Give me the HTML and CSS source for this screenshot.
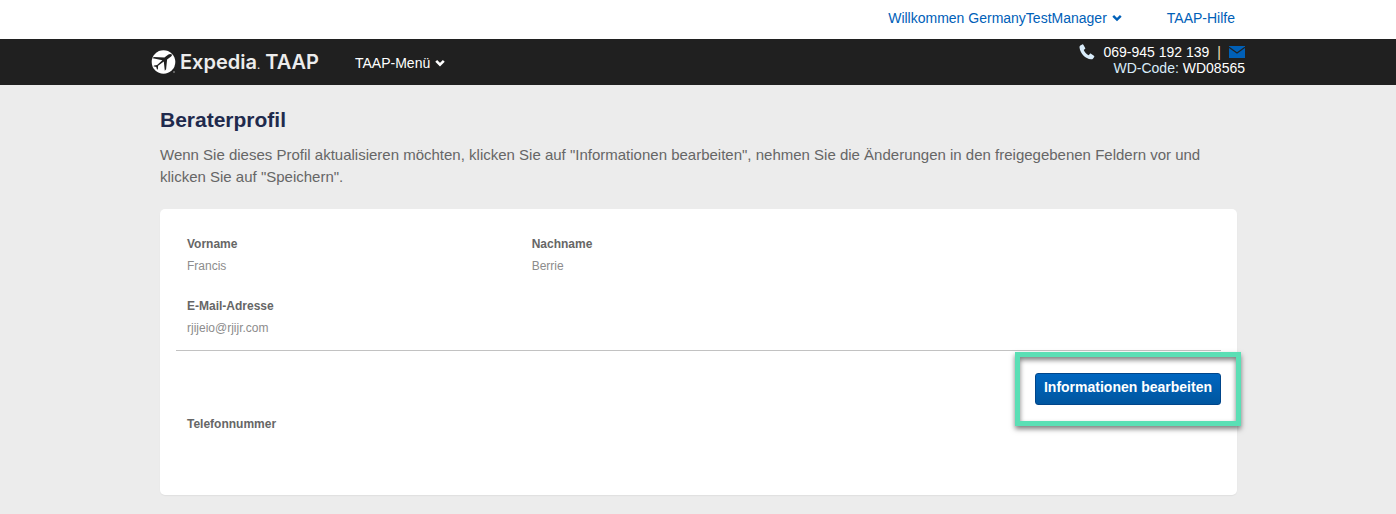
FILE: index.html
```html
<!DOCTYPE html>
<html lang="de">
<head>
<meta charset="utf-8">
<meta name="viewport" content="width=device-width, initial-scale=1">
<title>Beraterprofil</title>
<link rel="stylesheet" href="styles.css">
</head>
<body>
<nav class="topbar">
  <div class="container topbar-inner">
    <button class="user-menu" type="button">Willkommen GermanyTestManager
      <svg class="chevron" viewBox="0 0 10 8" aria-hidden="true"><path d="M1.2 1.8 5 5.6 8.8 1.8" fill="none" stroke="currentColor" stroke-width="2.4"/></svg>
    </button>
    <a class="help-link" href="#">TAAP-Hilfe</a>
  </div>
</nav>
<header class="header">
  <div class="container header-inner">
    <a class="logo" href="#">
      <svg class="logo-mark" viewBox="0 0 26 24" aria-hidden="true">
        <circle cx="12.5" cy="12" r="11.8" fill="#fff"/>
        <path d="M20.8 4.600c.4.600 0 1.300-.7 1.800l-4 3.100-1 9.800-1.300 1.400-1-9.100-5.700 4.200-.2 3.200-.8.700-.9-2.700-2.800-.8.700-.8 3-.3 5.300-4.900-9.600-1.900.9-1.300 10.700.6 4-3.100c1-.8 2.700-.8 3.400.1z" fill="#202020"/>
        <circle cx="23" cy="22" r=".8" fill="#aaa"/>
      </svg>
      <span class="logo-text">Expedia<span class="logo-dot">.</span> TAAP</span>
    </a>
    <button class="main-menu" type="button">TAAP-Menü
      <svg class="chevron" viewBox="0 0 10 8" aria-hidden="true"><path d="M1.2 1.8 5 5.6 8.8 1.8" fill="none" stroke="currentColor" stroke-width="2.6"/></svg>
    </button>
    <div class="contact">
      <div class="contact-row">
        <svg class="phone" viewBox="0 0 16 16" aria-hidden="true"><path d="M1.3 1.6 3.2.5c.5-.3 1-.1 1.300.4l1.700 3c.2.400.1.900-.3 1.200L4.700 6c.9 2.200 2.600 4 4.900 5.200l1.200-1.300c.3-.3.800-.4 1.200-.1l2.900 1.900c.5.300.600.900.3 1.300l-1.300 1.700c-.4.500-1.100.7-1.800.6C6.200 14.600 1.300 9.500.5 3.400c-.1-.7.2-1.400.8-1.800z" fill="#d9ecfa"/></svg>
        <span>069-945 192 139</span>
        <span class="divider">|</span>
        <a class="mail" href="#" aria-label="E-Mail"><svg viewBox="0 0 16 12" aria-hidden="true"><path d="M0 0h16v12H0z" fill="#0060b8"/><path d="M0 1.200 8 7l8-5.800" fill="none" stroke="#202020" stroke-width="1.200"/></svg></a>
      </div>
      <div class="code"><span class="code-label">WD-Code:</span> WD08565</div>
    </div>
  </div>
</header>
<main class="container content">
  <h1 class="title">Beraterprofil</h1>
  <p class="intro">Wenn Sie dieses Profil aktualisieren möchten, klicken Sie auf "Informationen bearbeiten", nehmen Sie die Änderungen in den freigegebenen Feldern vor und klicken Sie auf "Speichern".</p>
  <section class="card">
    <dl class="fields">
      <div><dt>Vorname</dt><dd>Francis</dd></div>
      <div><dt>Nachname</dt><dd>Berrie</dd></div>
      <div class="row-start"><dt>E-Mail-Adresse</dt><dd>rjijeio@rjijr.com</dd></div>
    </dl>
    <div class="actions">
      <div class="highlight"><button class="edit" type="button">Informationen bearbeiten</button></div>
    </div>
    <dl class="fields fields-phone">
      <div><dt>Telefonnummer</dt><dd></dd></div>
    </dl>
  </section>
</main>
</body>
</html>
```

FILE: styles.css
```css
* {
  box-sizing: border-box;
}

body {
  margin: 0;
  background: #ececec;
  font-family: "Liberation Sans", Arial, sans-serif;
  font-size: 14px;
  line-height: 16px;
}

a {
  color: inherit;
  text-decoration: none;
}

button {
  padding: 0;
  border: 0;
  background: none;
  color: inherit;
  font: inherit;
  cursor: pointer;
}

h1, p, dl, dd {
  margin: 0;
}

svg {
  display: block;
}

.container {
  width: 100%;
  max-width: 1094px;
  margin: 0 auto;
}

.topbar {
  background: #fff;
  color: #0060b8;
}

.topbar-inner {
  display: flex;
  justify-content: flex-end;
  align-items: center;
  gap: 45px;
  padding: 10px 10px 13px;
}

.user-menu,
.main-menu {
  display: flex;
  align-items: center;
  gap: 5px;
}

.chevron {
  width: 10px;
  height: 8px;
}

.header {
  background: #202020;
  color: #fff;
}

.header-inner {
  display: flex;
  align-items: center;
  min-height: 46px;
}

.logo {
  display: flex;
  align-items: center;
  gap: 3px;
}

.logo-mark {
  width: 26px;
  height: 24px;
}

.logo-text {
  padding-top: 2px;
  color: #ececec;
  font-family: Inter, sans-serif;
  font-size: 20px;
  font-weight: 600;
  line-height: 24px;
}

.logo-dot {
  font-size: 10px;
}

.main-menu {
  margin-left: 36px;
  padding-top: 2px;
}

.contact {
  margin-left: auto;
  padding-bottom: 4px;
  text-align: right;
}

.contact-row {
  display: flex;
  justify-content: flex-end;
  align-items: center;
  gap: 8px;
}

.phone {
  width: 16px;
  height: 16px;
}

.divider {
  color: #f0dfb8;
}

.mail svg {
  width: 16px;
  height: 12px;
}

.code-label {
  color: #d9ecfa;
}

.content {
  padding: 23px 8px 19px 9px;
}

.title {
  color: #1f2a4d;
  font-size: 21px;
  line-height: 24px;
}

.intro {
  margin: 12px 0 21px;
  color: #666;
  font-size: 15px;
  line-height: 22px;
}

.card {
  padding: 24px 16px 60px;
  border-radius: 5px;
  background: #fff;
  box-shadow: 0 1px 1px #e0e0e0;
}

.fields {
  display: grid;
  grid-template-columns: repeat(3, 1fr);
  row-gap: 18px;
  padding: 0 0 11px 11px;
  font-size: 12px;
  line-height: 22px;
}

.fields dt {
  color: #666;
  font-weight: bold;
}

.fields dd {
  color: #8c8c8c;
}

.row-start {
  grid-column-start: 1;
}

.actions {
  display: flex;
  justify-content: flex-end;
  padding-top: 1px;
  border-top: 1px solid #c2c2c2;
}

.highlight {
  margin-right: -20px;
  padding: 16px 15px;
  border: 5px solid #5bdfb5;
  box-shadow: 0 3px 5px rgba(0, 0, 0, 0.5), inset 0 3px 5px rgba(0, 0, 0, 0.5);
}

.edit {
  display: block;
  padding: 5px 8px 9px;
  border: 1px solid #00458a;
  border-radius: 3px;
  background: linear-gradient(#0066c0, #00569f);
  color: #fff;
  font-weight: bold;
}

.fields-phone {
  margin-top: -13px;
  padding-bottom: 0;
}
```
